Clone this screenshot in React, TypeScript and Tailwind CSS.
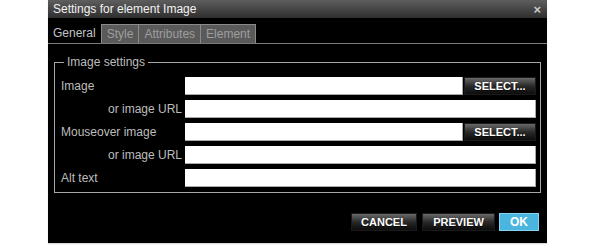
import React from "react";

const labelClass = "text-[12px] leading-[18px] text-[#bdbdbd]";
const inputClass =
  "h-[18px] bg-white border-r border-b border-[#a9a9a9] outline-none px-1 text-[12px] text-black";
const darkButton =
  "h-[18px] bg-gradient-to-b from-[#6a6a6a] via-[#2a2a2a] to-[#0c0c0c] border border-[#1a1a1a] text-white font-bold text-[11px] leading-none uppercase [text-shadow:0_1px_1px_rgba(0,0,0,0.8)]";

function Tab({ label, active }: { label: string; active?: boolean }) {
  if (active) {
    return (
      <div className="h-[19px] px-[5px] bg-black text-[12px] leading-[19px] text-[#c4c4c4]">{label}</div>
    );
  }
  return (
    <div className="h-[19px] px-[5px] bg-[#5a5a5a] border border-b-0 border-[#8a8a8a] text-[12px] leading-[18px] text-[#9e9e9e] -ml-px first:ml-0">
      {label}
    </div>
  );
}

export default function App() {
  return (
    <div className="w-[590px] h-[245px] bg-white font-['Liberation_Sans',Arial,sans-serif]">
      <div className="ml-[48px] w-[499px] h-[243px] bg-black flex flex-col shadow-[0_1px_1px_rgba(0,0,0,0.15)]">
        <div className="h-[18px] flex items-center justify-between px-[5px] bg-gradient-to-b from-[#5e5e5e] to-[#2f2f2f]">
          <span className="text-[12px] text-[#f2f2f2] leading-none">Settings for element Image</span>
          <span className="text-[13px] font-bold text-[#c8c8c8] leading-none mr-[1px]">×</span>
        </div>

        <div className="h-[26px] pt-[6px] flex items-end border-b border-[#7a7a7a]">
          <Tab label="General" active />
          <div className="flex">
            <Tab label="Style" />
            <Tab label="Attributes" />
            <Tab label="Element" />
          </div>
        </div>

        <fieldset className="mx-[6px] mt-[11px] border border-[#a8a8a8] pl-[6px] pr-[4px] pb-[5px] pt-[7px]">
          <legend className="ml-[3px] px-[3px] text-[12px] leading-[15px] text-[#bdbdbd]">Image settings</legend>
          <div className="grid grid-cols-[124px_1fr] gap-y-[5px]">
            <div className={labelClass}>Image</div>
            <div className="flex">
              <input className={`${inputClass} w-[278px]`} />
              <button className={`${darkButton} ml-px w-[72px]`}>Select...</button>
            </div>

            <div className={`${labelClass} text-right pr-[3px]`}>or image URL</div>
            <input className={`${inputClass} w-full`} />

            <div className={labelClass}>Mouseover image</div>
            <div className="flex">
              <input className={`${inputClass} w-[278px]`} />
              <button className={`${darkButton} ml-px w-[72px]`}>Select...</button>
            </div>

            <div className={`${labelClass} text-right pr-[3px]`}>or image URL</div>
            <input className={`${inputClass} w-full`} />

            <div className={labelClass}>Alt text</div>
            <input className={`${inputClass} w-full`} />
          </div>
        </fieldset>

        <div className="mt-[20px] flex justify-end pr-[8px] gap-[5px]">
          <button className={`${darkButton} w-[66px]`}>Cancel</button>
          <button className={`${darkButton} w-[73px]`}>Preview</button>
          <button className="h-[18px] w-[40px] -ml-px bg-[#4ab6e0] border border-[#86d3f2] text-white font-bold text-[12px] leading-none">
            OK
          </button>
        </div>
      </div>
    </div>
  );
}
